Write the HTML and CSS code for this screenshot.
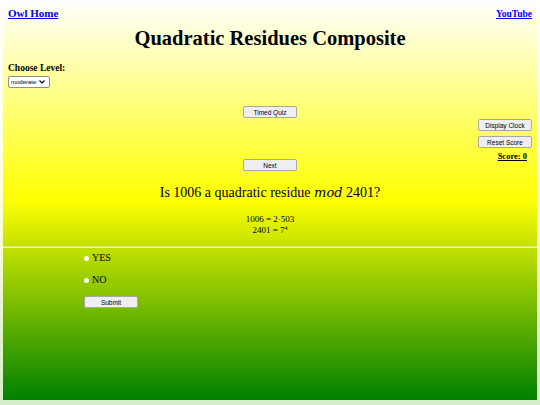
FILE: index.html
```html
<!DOCTYPE html>
<html>
<head>
<meta charset="utf-8">
<link rel="stylesheet" href="styles.css">
</head>
<body>
<div class="page">
  <header class="topbar">
    <a href="#" class="navlink">Owl Home</a>
    <a href="#" class="navlink small">YouTube</a>
  </header>
  <h1 class="title">Quadratic Residues Composite</h1>
  <div class="level">
    <label class="level-label">Choose Level:</label>
    <div class="select-wrap">
      <select class="level-select"><option>moderate</option></select>
      <svg class="chev" width="6" height="4" viewBox="0 0 6 4"><path d="M0.5 0.5 L3 3 L5.5 0.5" fill="none" stroke="#000" stroke-width="1.1"/></svg>
    </div>
  </div>
  <div class="controls">
    <div class="spacer"></div>
    <div class="center-col">
      <button class="btn">Timed Quiz</button>
      <button class="btn next">Next</button>
    </div>
    <div class="side-col">
      <button class="btn">Display Clock</button>
      <button class="btn">Reset Score</button>
      <a href="#" class="score">Score: 0</a>
    </div>
  </div>
  <p class="question">Is 1006 a quadratic residue <i class="mod">mod</i> 2401?</p>
  <div class="factors">
    <div>1006 = 2·503</div>
    <div>2401 = 7<sup>4</sup></div>
  </div>
  <hr class="rule">
  <form class="answers">
    <label class="opt"><span class="dot"></span>YES</label>
    <label class="opt"><span class="dot"></span>NO</label>
    <button type="button" class="btn submit">Submit</button>
  </form>
</div>
</body>
</html>
```
FILE: styles.css
```css
html {
  height: 100%;
  background: linear-gradient(#ffffff, #ffffd8 50%, #d6ecc8);
}
body {
  margin: 0;
  padding: 0 3px 5px 3px;
  height: 100%;
  box-sizing: border-box;
  font-family: "Liberation Serif", "Times New Roman", serif;
  color: #000;
}
.page {
  height: 100%;
  background: linear-gradient(#ffffff, #ffff00 50%, #008000);
  display: flex;
  flex-direction: column;
  padding: 0 5px;
  box-sizing: border-box;
}
.topbar {
  display: flex;
  justify-content: space-between;
  align-items: flex-start;
  padding-top: 7px;
  height: 18px;
}
.navlink {
  color: #0000ee;
  font-weight: bold;
  font-size: 11px;
  text-decoration: underline;
}
.navlink.small {
  font-size: 9.5px;
  padding-top: 2px;
}
.title {
  margin: 0;
  text-align: center;
  font-size: 20.5px;
  line-height: 26px;
}
.level {
  margin-top: 12px;
  display: flex;
  flex-direction: column;
  align-items: flex-start;
}
.level-label {
  font-weight: bold;
  font-size: 9.5px;
  line-height: 11px;
}
.select-wrap {
  position: relative;
  margin-top: 2px;
  width: 42px;
  height: 12px;
}
.level-select {
  appearance: none;
  -webkit-appearance: none;
  font-family: "Liberation Sans", Arial, sans-serif;
  font-size: 6px;
  height: 12px;
  width: 42px;
  padding: 0 0 0 2px;
  border: 1px solid #8f8f8f;
  border-radius: 2px;
  background: #fff;
  color: #000;
  display: block;
}
.chev {
  position: absolute;
  right: 5px;
  top: 4px;
  pointer-events: none;
}
.controls {
  display: flex;
  align-items: flex-start;
  margin-top: 18px;
}
.spacer {
  flex: 1;
}
.center-col {
  display: flex;
  flex-direction: column;
  gap: 41px;
  width: 54px;
}
.side-col {
  flex: 1;
  display: flex;
  flex-direction: column;
  align-items: flex-end;
  gap: 5px;
  margin-top: 13px;
}
.btn {
  font-family: "Liberation Sans", Arial, sans-serif;
  font-size: 6.5px;
  height: 12px;
  width: 54px;
  padding: 0;
  background: #efefef;
  border: 1px solid #a8a8a8;
  border-radius: 2px;
  color: #000;
}
.score {
  margin-top: -2px;
  margin-right: 5px;
  font-weight: bold;
  font-size: 8.5px;
  color: #000;
  text-decoration: underline;
}
.question {
  margin: 13px 0 0 0;
  text-align: center;
  font-size: 14px;
  line-height: 18px;
}
.mod {
  font-family: "DejaVu Serif", serif;
  font-style: italic;
  font-size: 13px;
}
.factors {
  margin-top: 12px;
  text-align: center;
  font-size: 9px;
  line-height: 11px;
}
.factors sup {
  font-size: 6px;
  vertical-align: 3px;
  line-height: 0;
}
.rule {
  margin: 10px -5px 0 -5px;
  border: 0;
  border-top: 1px solid #e0e080;
  border-bottom: 1px solid #f0f6b0;
  height: 0;
}
.answers {
  display: flex;
  flex-direction: column;
  align-items: flex-start;
  padding-left: 76px;
  margin-top: 4px;
}
.opt {
  display: flex;
  align-items: center;
  font-size: 10px;
  line-height: 12px;
  height: 12px;
  margin-bottom: 10px;
}
.dot {
  width: 5px;
  height: 5px;
  border-radius: 50%;
  background: #fff;
  margin-right: 3px;
}
.submit {
  margin-top: 0;
}
```
